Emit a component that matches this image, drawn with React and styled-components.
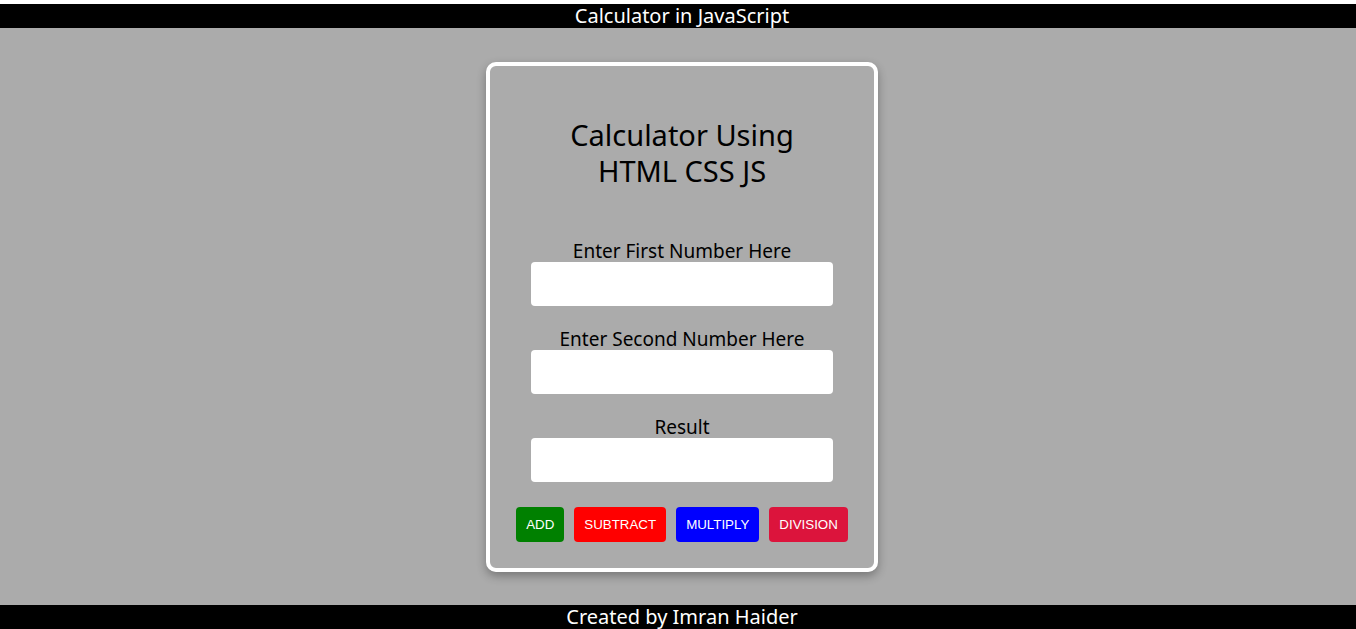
import styled, { createGlobalStyle } from "styled-components";

const GlobalStyle = createGlobalStyle`
  html, body {
    margin: 0;
    padding: 0;
    background: #fff;
    overflow: hidden;
  }
  body {
    font-family: "Noto Sans", "DejaVu Sans", sans-serif;
  }
`;

// the original page is 8px wider than the window, so everything sits 4px right of centre
const Page = styled.div`
  display: flex;
  flex-direction: column;
  height: 629px;
  margin-right: -8px;
  padding-top: 4px;
  box-sizing: border-box;
`;

const Bar = styled.div`
  background: #000;
  color: #fff;
  height: 24px;
  line-height: 24px;
  text-align: center;
  font-size: 20px;
  flex-shrink: 0;
`;

const Main = styled.main`
  flex: 1;
  background: #ababab;
  display: flex;
  justify-content: center;
  align-items: flex-start;
  padding-top: 34px;
`;

const Card = styled.div`
  width: 384px;
  border: 4px solid #fff;
  border-radius: 10px;
  box-shadow: 0 4px 10px rgba(0, 0, 0, 0.3);
  display: flex;
  flex-direction: column;
  align-items: center;
  padding: 51px 0 26px;
`;

const Title = styled.h1`
  margin: 0 0 51px;
  font-size: 29px;
  font-weight: 400;
  line-height: 36px;
  text-align: center;
  color: #000;
`;

const Field = styled.div`
  display: flex;
  flex-direction: column;
  align-items: center;
  margin-bottom: 22px;
`;

const Label = styled.label`
  font-size: 19px;
  line-height: 22px;
  color: #000;
`;

const Input = styled.input`
  width: 302px;
  height: 44px;
  border: none;
  border-radius: 4px;
  background: #fff;
  box-sizing: border-box;
  outline: none;
`;

const Buttons = styled.div`
  display: flex;
  gap: 10px;
  margin-top: 3px;
`;

const Btn = styled.button`
  height: 35px;
  padding: 0 10px;
  border: none;
  border-radius: 4px;
  background: ${(p) => p.$bg};
  color: #fff;
  font-family: "Liberation Sans", Arial, sans-serif;
  font-size: 13.33px;
  cursor: pointer;
`;

const ops = [
  { label: "ADD", bg: "#008000" },
  { label: "SUBTRACT", bg: "#ff0000" },
  { label: "MULTIPLY", bg: "#0000ff" },
  { label: "DIVISION", bg: "#dc143c" },
];

export default function App() {
  return (
    <>
      <GlobalStyle />
      <Page>
        <Bar>Calculator in JavaScript</Bar>
        <Main>
          <Card>
            <Title>
              Calculator Using
              <br />
              HTML CSS JS
            </Title>
            <Field>
              <Label>Enter First Number Here</Label>
              <Input type="number" />
            </Field>
            <Field>
              <Label>Enter Second Number Here</Label>
              <Input type="number" />
            </Field>
            <Field>
              <Label>Result</Label>
              <Input type="text" readOnly />
            </Field>
            <Buttons>
              {ops.map((op) => (
                <Btn key={op.label} $bg={op.bg}>
                  {op.label}
                </Btn>
              ))}
            </Buttons>
          </Card>
        </Main>
        <Bar>Created by Imran Haider</Bar>
      </Page>
    </>
  );
}
